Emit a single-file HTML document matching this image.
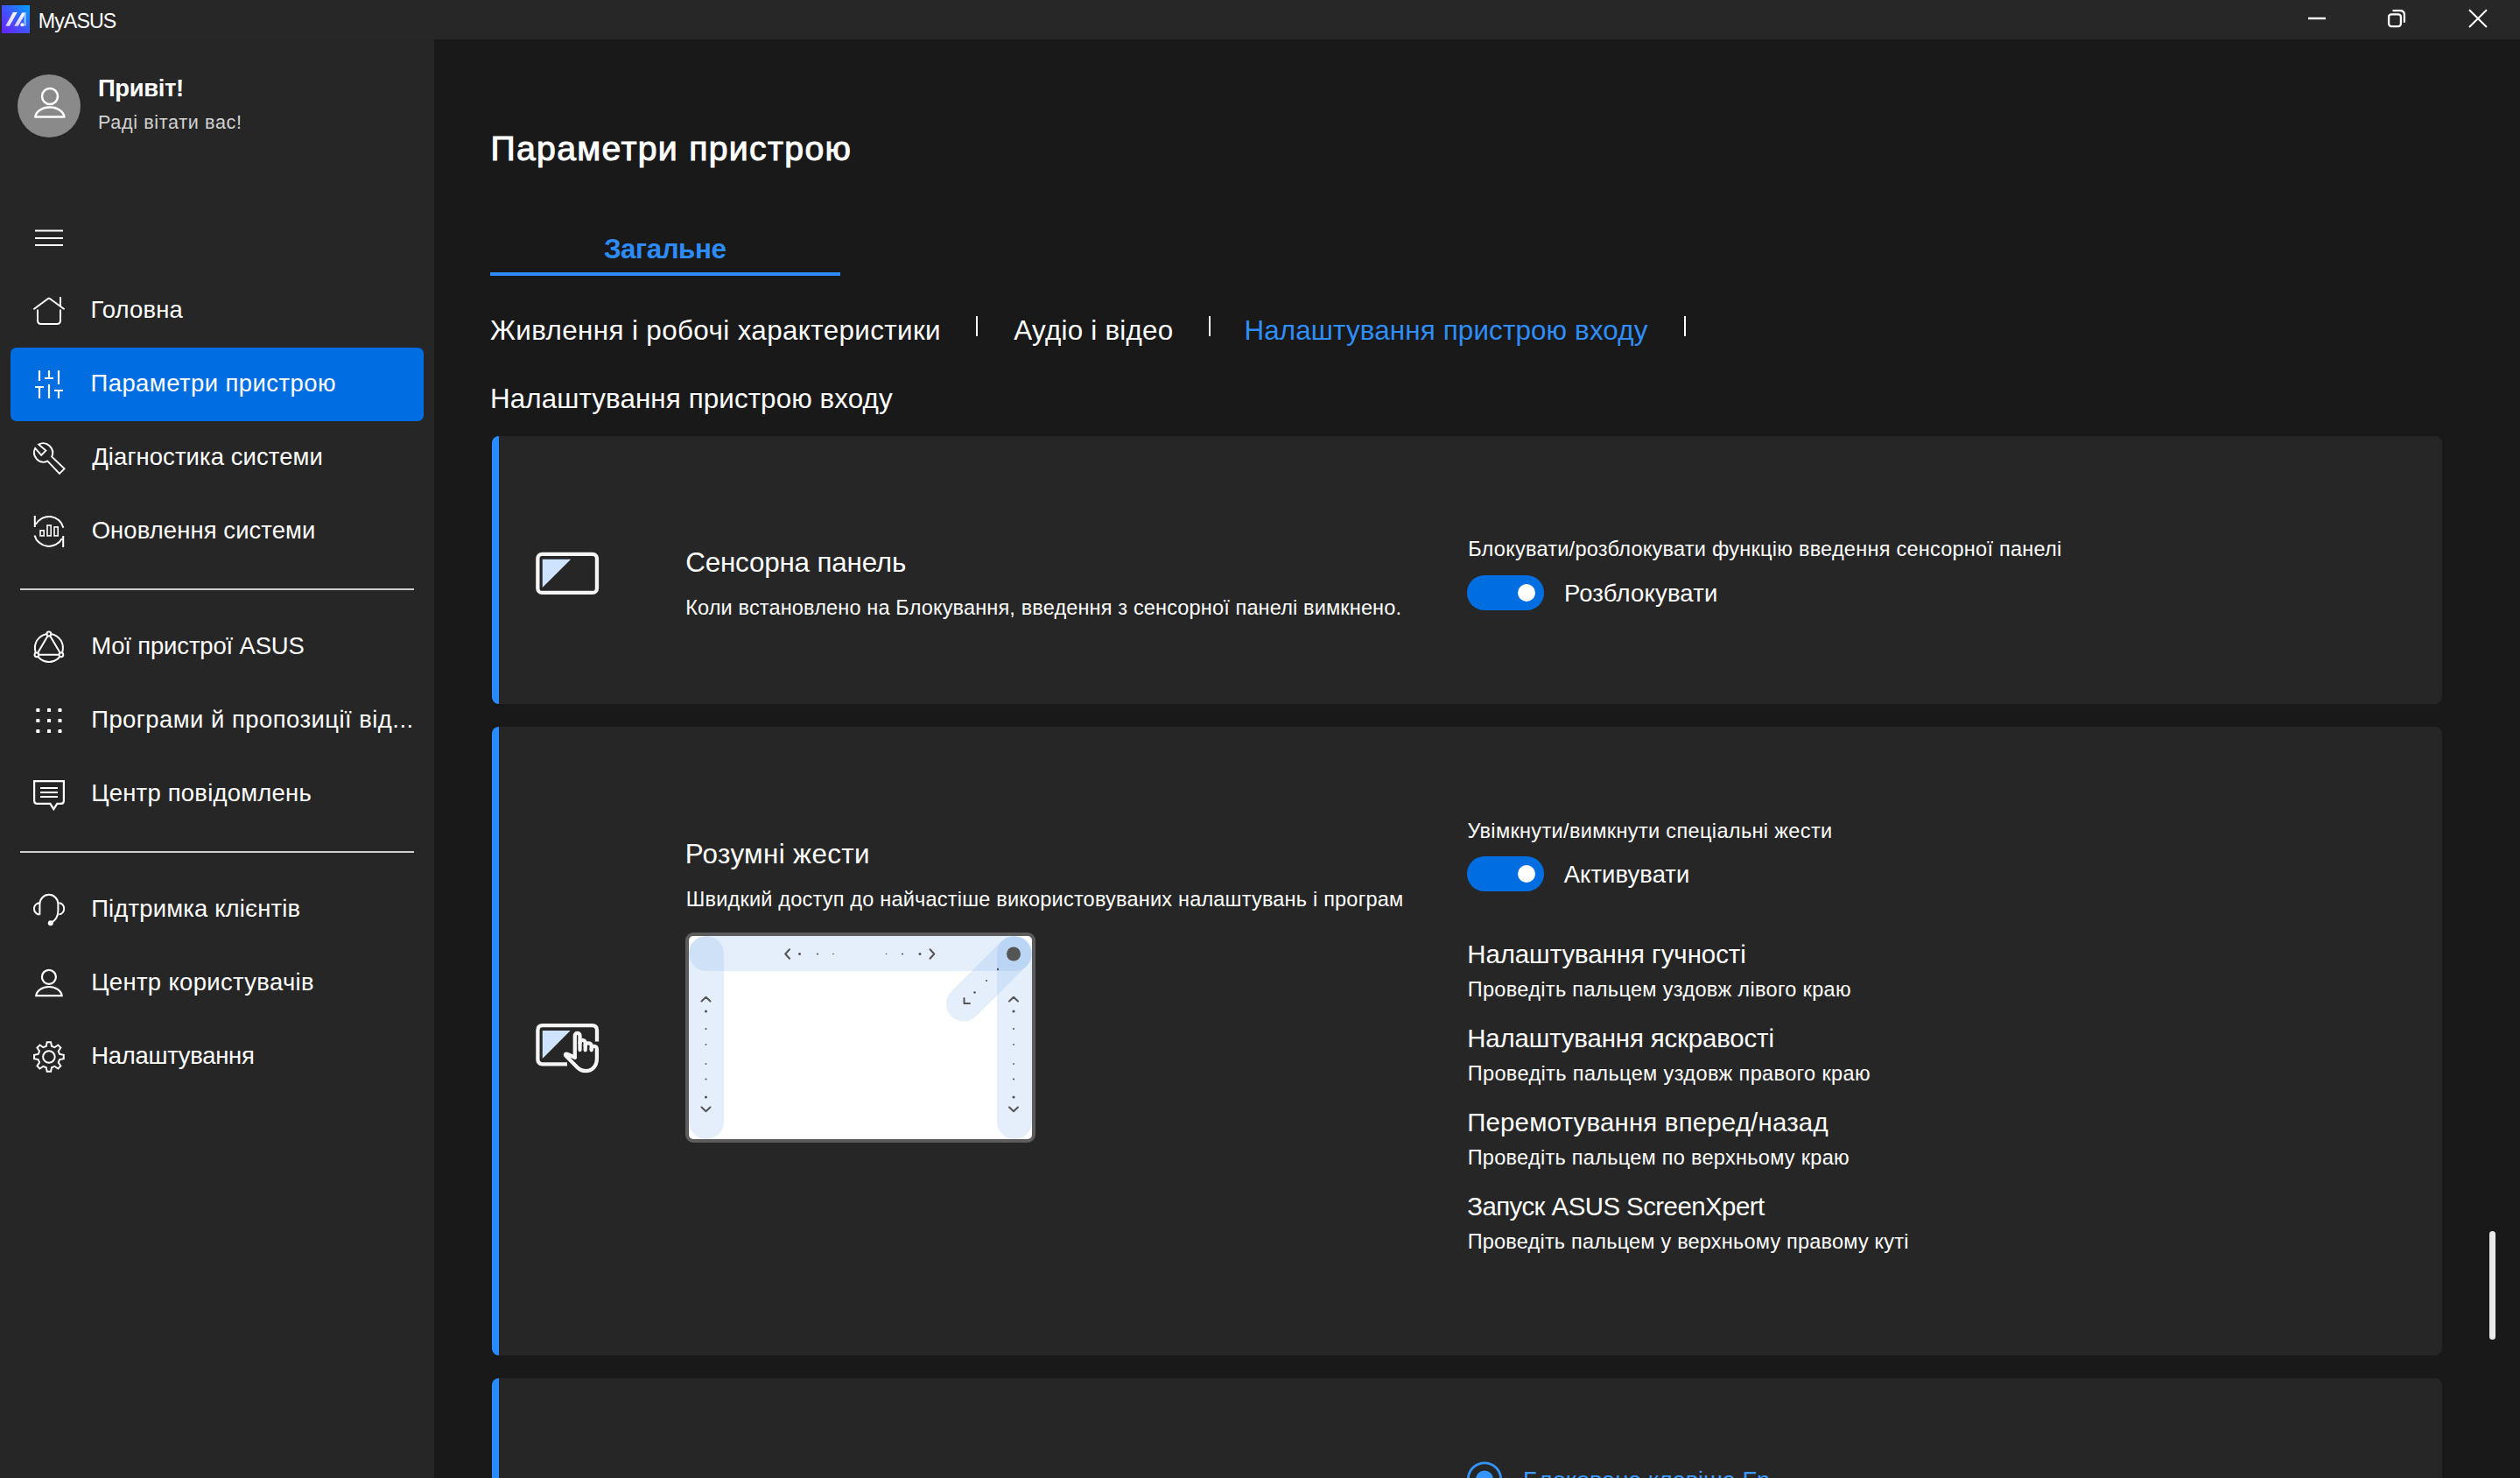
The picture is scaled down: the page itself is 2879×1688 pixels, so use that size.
<!DOCTYPE html>
<html lang="uk"><head><meta charset="utf-8"><title>MyASUS</title>
<style>
html,body{margin:0;padding:0;background:#191919;}
body{width:2879px;height:1688px;position:relative;overflow:hidden;font-family:"Liberation Sans",sans-serif;color:#fff;}
.t{position:absolute;white-space:nowrap;line-height:1;}
.abs{position:absolute;}
#titlebar{left:0;top:0;width:2879px;height:45px;background:#272727;}
#sidebar{left:0;top:0;width:496px;height:1688px;background:#262626;}
.sep{position:absolute;left:23px;width:450px;height:2px;background:#cfcfcf;}
.card{position:absolute;left:562px;width:2228px;background:#262626;border-radius:8px;overflow:hidden;}
.card:before{content:"";position:absolute;left:0;top:0;bottom:0;width:8px;background:#2a8bff;}
.toggle{position:absolute;width:88px;height:40px;border-radius:20px;background:#006de1;}
.toggle:after{content:"";position:absolute;left:58px;top:10px;width:20px;height:20px;border-radius:50%;background:#fff;}
svg{position:absolute;left:0;top:0;overflow:visible;}
.ic{fill:none;stroke:#fff;stroke-width:2;stroke-linejoin:round;}
</style></head><body>
<div id="sidebar" class="abs"></div>
<div id="titlebar" class="abs"></div>
<div class="abs" style="left:496px;top:45px;width:2383px;height:1643px;background:#191919;"></div>
<header>
<svg width="2879" height="46" viewBox="0 0 2879 46">
<defs><linearGradient id="lg" x1="0" y1="1" x2="1" y2="0"><stop offset="0" stop-color="#6a1fff"/><stop offset="0.5" stop-color="#3f55ff"/><stop offset="1" stop-color="#00a4ff"/></linearGradient>
<linearGradient id="lw" x1="0" y1="1" x2="1" y2="0"><stop offset="0" stop-color="#d9c8ff"/><stop offset="1" stop-color="#ffffff"/></linearGradient></defs>
<rect x="2" y="6" width="32" height="32" fill="url(#lg)"/>
<path d="M6.3,29.8 L10.9,29.8 L19.7,14 L14.9,14Z" fill="url(#lw)"/>
<path d="M16.2,29.8 L20.7,29.8 L29.5,14.4 L25.2,14.4Z" fill="url(#lw)"/>
<path d="M27.2,15 L29.8,14.4 L29.8,29.8 L27.6,29.8Z" fill="#a9d4ff" opacity="0.75"/>
<circle cx="25.4" cy="28.3" r="2" fill="#fff"/>
<g fill="none" stroke="#fff">
<path d="M2637,21 H2657" stroke-width="2.4"/>
<rect x="2729.1" y="16.3" width="13.8" height="13.8" rx="3" stroke-width="2.3"/>
<path d="M2733.5,12.2 H2742 Q2746.9,12.2 2746.9,17 V25.8" stroke-width="2.3"/>
<path d="M2821,11.2 L2841,31 M2841,11.2 L2821,31" stroke-width="2"/>
</g></svg>
<div class="t " style="left:43.8px;top:12.6px;font-size:23.23px;letter-spacing:-0.948px;color:#ffffff;">MyASUS</div>
</header>
<nav>
<div class="abs" style="left:20px;top:85px;width:72px;height:72px;border-radius:50%;background:#8a8a8a;"></div>
<svg width="496" height="1688" viewBox="0 0 496 1688">
<g class="ic" style="stroke-width:2.5">
<circle cx="57" cy="110" r="9"/>
<path d="M40.3,133.6 A16.6,12 0 0 1 73.4,133.6 Z"/>
</g>
<g fill="#fff">
<rect x="40" y="262.5" width="32" height="2"/><rect x="40" y="271" width="32" height="2"/><rect x="40" y="279" width="32" height="2"/>
</g>
<g class="ic">
<!-- home -->
<path d="M38.4,353.3 L54.3,341.5 Q55.9,340.3 57.5,341.5 L73.6,353.3 M69,339 V349.6 M43,353.4 V366 Q43,370 47,370 H65 Q69,370 69,366 V353.4" stroke-linejoin="miter"/>
</g>
</svg>
<div class="t " style="left:112px;top:87px;font-size:27.44px;letter-spacing:-0.379px;color:#ffffff;font-weight:700;">Привіт!</div>
<div class="t " style="left:112px;top:128.5px;font-size:21.56px;letter-spacing:0.653px;color:#d2d2d2;">Раді вітати вас!</div>
<div class="abs" style="left:12px;top:397px;width:472px;height:84px;border-radius:6.5px;background:#006de1;"></div>
<svg width="496" height="1688" viewBox="0 0 496 1688"><g class="ic">
<path d="M45,423 V435 M40,442 H50 M45,442 V455 M56,423 V432 M51,432 H61 M56,439 V455 M67,423 V439 M62,446 H72 M67,446 V455" stroke-width="2.2" stroke-linejoin="miter"/>
<path d="M44.1,507.6 L52.4,514.6 L47.2,519.8 L40.2,511.85 A10.9,10.9 0 0 0 54.4,526.7 L67.9,541 L73.6,535.3 L59.2,521.6 A10.9,10.9 0 0 0 44.1,507.6 Z" stroke-width="1.9" stroke-linejoin="miter"/>
<path d="M40.93,598.84 A17,17 0 0 1 72.36,602.64 M39.8,589 V602 M70.87,614.96 A17,17 0 0 1 39.5,611.39 M72.2,612 V625" stroke-linejoin="miter"/>
<g stroke-width="1.6" stroke-linejoin="miter"><rect x="46" y="605.9" width="4.2" height="6"/><rect x="54" y="600" width="4.2" height="11.9"/><rect x="62" y="601.9" width="4.2" height="10"/></g>
<circle cx="55.9" cy="739.9" r="16"/><path d="M55.9,724 L41.9,747.8 H69.9 Z"/>
<g fill="#262626"><circle cx="55.9" cy="724" r="2.4"/><circle cx="41.9" cy="747.8" r="2.4"/><circle cx="69.9" cy="747.8" r="2.4"/></g>
<path d="M39.1,892.1 H72.9 V914.5 Q72.9,917.9 69.5,917.9 H65.3 L61.3,924.2 L57.4,917.9 H42.5 Q39.1,917.9 39.1,914.5 Z" stroke-width="2.2" stroke-linejoin="miter"/>
<path d="M46,900 H66 M46,905 H66 M46,910 H66" stroke-width="2.2"/>
<path d="M45.4,1044.4 V1032.6 A10.5,10.8 0 0 1 66.4,1032.6 V1040 Q66.4,1050 58,1054"/>
<path d="M45.4,1031.2 A6.5,6.6 0 0 0 45.4,1044.4 M67.4,1031.2 A5.8,6.5 0 0 1 67.4,1044.2"/>
<circle cx="57.8" cy="1054.2" r="3" fill="#fff" stroke="none"/>
<circle cx="55.9" cy="1115.8" r="8" stroke-width="2.2"/><path d="M41.3,1137.1 A14.7,11 0 0 1 70.6,1137.1 Z" stroke-width="2.2" stroke-linejoin="miter"/>
<path d="M52.84,1194.78 L53.70,1190.14 L58.10,1190.14 L58.96,1194.78 L62.38,1196.20 L66.26,1193.52 L69.38,1196.64 L66.70,1200.52 L68.12,1203.94 L72.76,1204.80 L72.76,1209.20 L68.12,1210.06 L66.70,1213.48 L69.38,1217.36 L66.26,1220.48 L62.38,1217.80 L58.96,1219.22 L58.10,1223.86 L53.70,1223.86 L52.84,1219.22 L49.42,1217.80 L45.54,1220.48 L42.42,1217.36 L45.10,1213.48 L43.68,1210.06 L39.04,1209.20 L39.04,1204.80 L43.68,1203.94 L45.10,1200.52 L42.42,1196.64 L45.54,1193.52 L49.42,1196.20Z" stroke-linejoin="miter"/><circle cx="55.9" cy="1207" r="6.8"/>
</g>
<g fill="#fff"><rect x="41.3" y="809" width="4.1" height="4.1" rx="0.9"/><rect x="54" y="809" width="4.1" height="4.1" rx="0.9"/><rect x="66.4" y="809" width="4.1" height="4.1" rx="0.9"/><rect x="41.3" y="821" width="4.1" height="4.1" rx="0.9"/><rect x="54" y="821" width="4.1" height="4.1" rx="0.9"/><rect x="66.4" y="821" width="4.1" height="4.1" rx="0.9"/><rect x="41.3" y="833" width="4.1" height="4.1" rx="0.9"/><rect x="54" y="833" width="4.1" height="4.1" rx="0.9"/><rect x="66.4" y="833" width="4.1" height="4.1" rx="0.9"/></g></svg>
<div class="t " style="left:103.5px;top:340px;font-size:27.44px;letter-spacing:0.169px;color:#ffffff;">Головна</div>
<div class="t " style="left:103.5px;top:423.75px;font-size:27.44px;letter-spacing:0.457px;color:#ffffff;">Параметри пристрою</div>
<div class="t " style="left:105.2px;top:507.5px;font-size:27.44px;letter-spacing:0.094px;color:#ffffff;">Діагностика системи</div>
<div class="t " style="left:104.7px;top:592px;font-size:27.44px;letter-spacing:0.088px;color:#ffffff;">Оновлення системи</div>
<div class="t " style="left:104.2px;top:723.5px;font-size:27.44px;letter-spacing:-0.142px;color:#ffffff;">Мої пристрої ASUS</div>
<div class="t " style="left:104.2px;top:808px;font-size:27.44px;letter-spacing:0.47px;color:#ffffff;">Програми й пропозиції від...</div>
<div class="t " style="left:104.2px;top:892px;font-size:27.44px;letter-spacing:0.237px;color:#ffffff;">Центр повідомлень</div>
<div class="t " style="left:104.2px;top:1023.5px;font-size:27.44px;letter-spacing:0.161px;color:#ffffff;">Підтримка клієнтів</div>
<div class="t " style="left:104.2px;top:1108.25px;font-size:27.44px;letter-spacing:0.345px;color:#ffffff;">Центр користувачів</div>
<div class="t " style="left:104.2px;top:1192px;font-size:27.44px;letter-spacing:-0.271px;color:#ffffff;">Налаштування</div>
<div class="sep" style="top:672px"></div><div class="sep" style="top:972px"></div>
</nav>
<main>
<div class="t " style="left:560.5px;top:149.9px;font-size:39.2px;letter-spacing:1.321px;color:#ffffff;-webkit-text-stroke:1px #fff;">Параметри пристрою</div>
<div class="t " style="left:689.9px;top:268.75px;font-size:31.36px;letter-spacing:-0.461px;color:#2d8cf9;font-weight:700;">Загальне</div>
<div class="abs" style="left:560px;top:310.5px;width:400px;height:4.5px;background:#2d8cf9;"></div>
<div class="t " style="left:560px;top:362px;font-size:31.36px;letter-spacing:0.381px;color:#ffffff;">Живлення і робочі характеристики</div><div class="t " style="left:1158.2px;top:362px;font-size:31.36px;letter-spacing:0.244px;color:#ffffff;">Аудіо і відео</div><div class="t " style="left:1421.4px;top:362px;font-size:31.36px;letter-spacing:0.143px;color:#2f8ef9;">Налаштування пристрою входу</div>
<div class="abs" style="left:1115px;top:361px;width:2px;height:23px;background:#fff;"></div><div class="abs" style="left:1380.5px;top:361px;width:2px;height:23px;background:#fff;"></div><div class="abs" style="left:1923.5px;top:361px;width:2px;height:23px;background:#fff;"></div>
<div class="t " style="left:560px;top:439.6px;font-size:31.36px;letter-spacing:0.093px;color:#ffffff;">Налаштування пристрою входу</div>
<section>
<div class="card" style="top:498px;height:306px;"></div>
<svg width="2879" height="1688" viewBox="0 0 2879 1688">
<path d="M619.75,638.8 H652.2 L619.75,671Z" fill="#cde3ff"/>
<rect x="614.35" y="632.85" width="67.6" height="44.1" rx="5" fill="none" stroke="#f5f5f5" stroke-width="4.3"/>
</svg>
<div class="t " style="left:783.2px;top:626.7px;font-size:31.36px;letter-spacing:-0.173px;color:#ffffff;">Сенсорна панель</div><div class="t " style="left:783.2px;top:683px;font-size:23.52px;letter-spacing:0.145px;color:#ffffff;">Коли встановлено на Блокування, введення з сенсорної панелі вимкнено.</div><div class="t " style="left:1677.2px;top:616px;font-size:23.52px;letter-spacing:0.243px;color:#ffffff;">Блокувати/розблокувати функцію введення сенсорної панелі</div><div class="t " style="left:1786.9px;top:664px;font-size:27.44px;letter-spacing:0.2px;color:#ffffff;">Розблокувати</div>
<div class="toggle" style="left:1676px;top:657px;"></div>
</section>
<section>
<div class="card" style="top:830px;height:717.5px;"></div>
<div class="t " style="left:782.7px;top:959.8px;font-size:31.36px;letter-spacing:0.358px;color:#ffffff;">Розумні жести</div><div class="t " style="left:783.7px;top:1016px;font-size:23.52px;letter-spacing:0.202px;color:#ffffff;">Швидкий доступ до найчастіше використовуваних налаштувань і програм</div><div class="t " style="left:1676.5px;top:938px;font-size:23.52px;letter-spacing:0.349px;color:#ffffff;">Увімкнути/вимкнути спеціальні жести</div><div class="t " style="left:1786.7px;top:985px;font-size:27.44px;letter-spacing:0.068px;color:#ffffff;">Активувати</div>
<div class="toggle" style="left:1676px;top:978px;"></div>
<div class="t " style="left:1676.2px;top:1075px;font-size:29.4px;letter-spacing:-0.036px;color:#ffffff;">Налаштування гучності</div><div class="t " style="left:1676.7px;top:1119px;font-size:23.52px;letter-spacing:0.329px;color:#ffffff;">Проведіть пальцем уздовж лівого краю</div><div class="t " style="left:1676.2px;top:1171px;font-size:29.4px;letter-spacing:-0.136px;color:#ffffff;">Налаштування яскравості</div><div class="t " style="left:1676.7px;top:1215px;font-size:23.52px;letter-spacing:0.376px;color:#ffffff;">Проведіть пальцем уздовж правого краю</div><div class="t " style="left:1676.2px;top:1267px;font-size:29.4px;letter-spacing:0.207px;color:#ffffff;">Перемотування вперед/назад</div><div class="t " style="left:1676.7px;top:1310.5px;font-size:23.52px;letter-spacing:0.279px;color:#ffffff;">Проведіть пальцем по верхньому краю</div><div class="t " style="left:1676.2px;top:1363px;font-size:29.4px;letter-spacing:-0.532px;color:#ffffff;">Запуск ASUS ScreenXpert</div><div class="t " style="left:1676.7px;top:1406.5px;font-size:23.52px;letter-spacing:0.202px;color:#ffffff;">Проведіть пальцем у верхньому правому куті</div>
<svg width="2879" height="1688" viewBox="0 0 2879 1688">
<path d="M619.75,1177.1 H651.7 L619.75,1209.1Z" fill="#cde3ff"/>
<g fill="none" stroke="#f5f5f5" stroke-width="4.3" transform="translate(0,0.5)">
<path d="M648,1214.8 H619.9 Q614.4,1214.8 614.4,1209.3 V1176.2 Q614.4,1170.7 619.9,1170.7 H676.5 Q682,1170.7 682,1176.2 V1189"/>
<g stroke-linecap="round" stroke-linejoin="round">
<path d="M656.8,1207 V1182.2 A2.85,2.85 0 0 1 662.5,1182.2 V1198.6"/>
<path d="M662.5,1190.4 A3.1,3.1 0 0 1 668.7,1190.4 V1198.8"/>
<path d="M668.7,1193.9 A3.5,3.1 0 0 1 675.7,1193.9 V1198.8"/>
<path d="M675.7,1197.4 A3.1,3.1 0 0 1 681.9,1197.4 V1208.5 C681.9,1217 676.5,1222.6 669,1222.6 C664.5,1222.6 662,1221 660,1219 L646.2,1204.9 Q645.2,1203 647.8,1203.3 L656.8,1207.3"/>
</g></g>
</svg>
<div class="abs" style="left:783px;top:1064.5px;width:392px;height:232px;border:4px solid #5c5c5c;border-radius:9px;background:#fff;overflow:hidden;">
<svg width="392" height="232" viewBox="787 1068.5 392 232">
<rect x="787" y="1068.5" width="392" height="40" rx="20" fill="#4a90e2" opacity="0.145"/>
<rect x="787" y="1068.5" width="40" height="232" rx="20" fill="#4a90e2" opacity="0.145"/>
<rect x="1139" y="1068.5" width="40" height="232" rx="20" fill="#4a90e2" opacity="0.145"/>
<path d="M1158,1089 L1101,1146" stroke="#4a90e2" stroke-width="40" stroke-linecap="round" opacity="0.145" fill="none"/>
<g fill="none" stroke="#555" stroke-width="2" stroke-linecap="round" stroke-linejoin="round">
<path d="M902,1083.8 L897.2,1089 L902,1094.2"/><path d="M1062.5,1083.8 L1067.3,1089 L1062.5,1094.2"/>
<path d="M801.5,1143 L806.5,1138.2 L811.5,1143"/><path d="M801.5,1264 L806.5,1268.800 L811.5,1264"/>
<path d="M1153,1143 L1158,1138.2 L1163,1143"/><path d="M1153,1264 L1158,1268.800 L1163,1264"/>
<path d="M1101.5,1139.5 V1145.5 H1108"/>
</g>
<g fill="#555">
<circle cx="913.5" cy="1089" r="1.5"/><circle cx="934" cy="1089" r="1.1"/><circle cx="952" cy="1089" r="0.8"/>
<circle cx="1012.5" cy="1089" r="0.8"/><circle cx="1031" cy="1089" r="1.1"/><circle cx="1051" cy="1089" r="1.5"/>
<circle cx="1158" cy="1089" r="8"/>
<circle cx="1140" cy="1106.5" r="1.2"/><circle cx="1127" cy="1119.5" r="1.1"/><circle cx="1113.500" cy="1133" r="1.3"/>
<circle cx="806.5" cy="1154.5" r="1.6"/><circle cx="806.5" cy="1174.5" r="1.1"/><circle cx="806.5" cy="1192.5" r="0.9"/><circle cx="806.5" cy="1214.5" r="0.9"/><circle cx="806.5" cy="1232" r="1.1"/><circle cx="806.5" cy="1252.5" r="1.6"/><circle cx="1158" cy="1154.5" r="1.6"/><circle cx="1158" cy="1174.5" r="1.1"/><circle cx="1158" cy="1192.5" r="0.9"/><circle cx="1158" cy="1214.5" r="0.9"/><circle cx="1158" cy="1232" r="1.1"/><circle cx="1158" cy="1252.5" r="1.6"/>
</g></svg></div>
</section>
<section>
<div class="card" style="top:1574px;height:200px;"></div>
<svg width="2879" height="1688" viewBox="0 0 2879 1688"><circle cx="1696" cy="1689.5" r="18.7" fill="none" stroke="#3595ff" stroke-width="2.8"/><circle cx="1696" cy="1689.5" r="10" fill="#3595ff"/></svg>
<div class="t " style="left:1740px;top:1677.2px;font-size:27.44px;letter-spacing:-0.175px;color:#3b99ff;">Блокована клавіша Fn</div>
</section>
<div class="abs" style="left:2843.5px;top:1406px;width:7px;height:124px;border-radius:3.5px;background:#e9e9e9;"></div>
</main>
</body></html>
